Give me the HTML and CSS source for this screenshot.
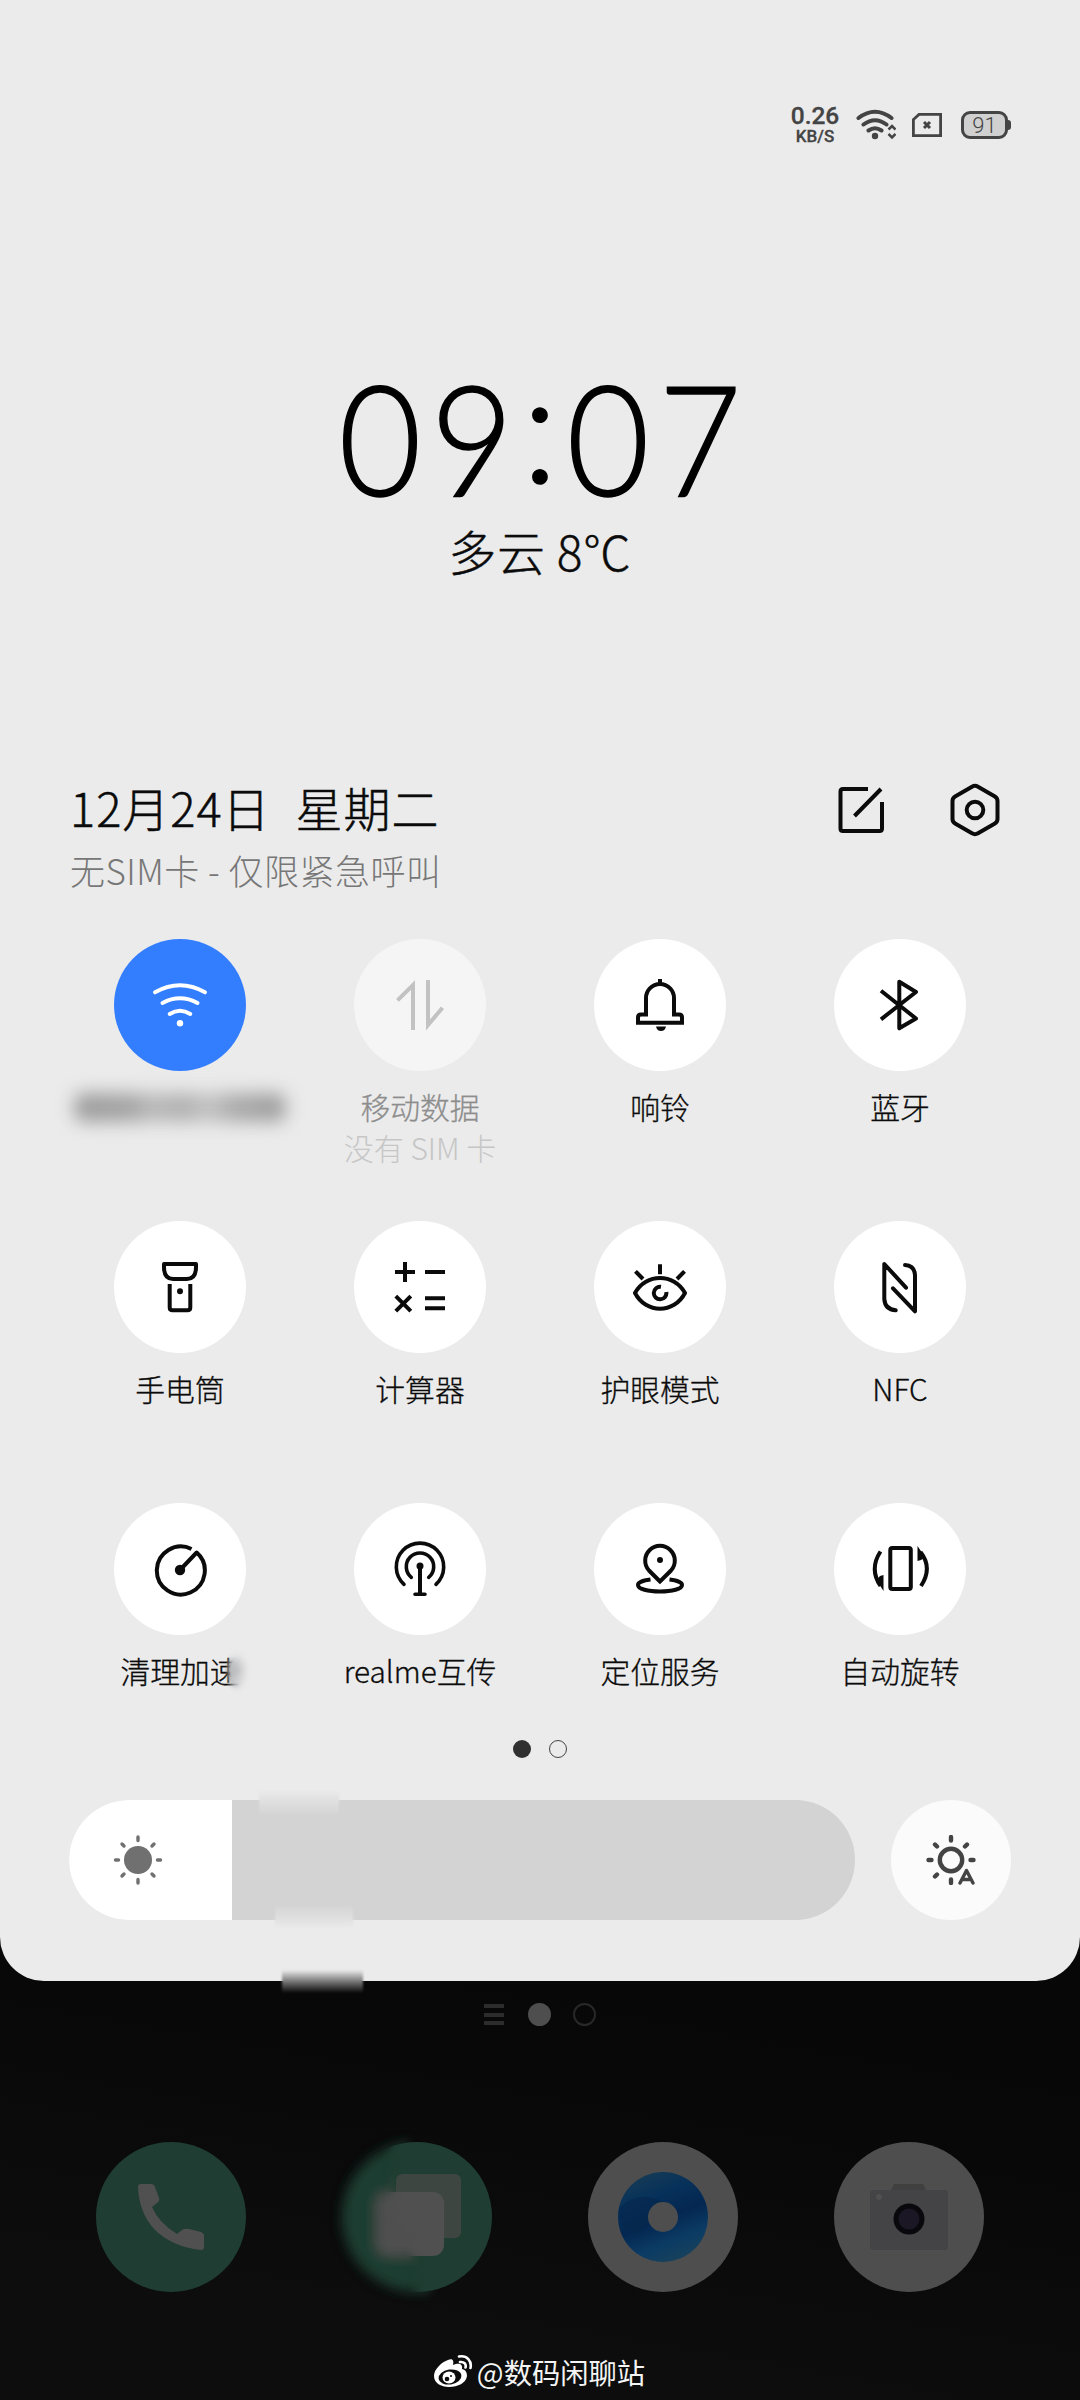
FILE: index.html
```html
<!DOCTYPE html>
<html lang="zh-CN">
<head>
<meta charset="utf-8">
<title>控制中心</title>
<link rel="stylesheet" href="styles.css">
</head>
<body>
<div class="screen">
  <main class="panel">
    <div class="status">
      <div class="speed"><span class="rate">0.26</span><span class="unit">KB/S</span></div>
      <svg class="st-wifi" width="40" height="32" viewBox="0 0 40 32" fill="none" stroke="#444" stroke-width="4" stroke-linecap="round">
        <path d="M2.500 9Q19 -3.500 35.500 9M7.500 15.500Q19 7 30.500 15.500M12.500 21.500Q19 17 25.500 21.500"/><circle cx="19" cy="27" r="3.200" fill="#444" stroke="none"/>
        <path d="M32.500 20.500l3.500-3.500 3.500 3.500M32.500 25l3.500 3.500 3.500-3.500" stroke-width="2.500" stroke-linecap="butt"/>
      </svg>
      <svg class="st-sim" width="30" height="24" viewBox="0 0 30 24" fill="none" stroke="#444" stroke-width="2.800">
        <path d="M7 1.400H28.600V22.600H1.400V6.500Z"/><path d="M12 9l6 6M18 9l-6 6" stroke-width="3"/>
      </svg>
      <div class="battery">91</div>
    </div>

    <section class="clock">
      <div class="time"><span>0</span><span>9</span><span class="colon">:</span><span>0</span><span>7</span></div>
      <div class="weather">多云 8℃</div>
    </section>

    <header class="head">
      <div>
        <div class="date">12月24日<span class="week">星期二</span></div>
        <div class="carrier">无SIM卡 - 仅限紧急呼叫</div>
      </div>
      <div class="actions">
        <svg width="46" height="52" viewBox="0 0 46 52" fill="none" stroke="#0b0b0b" stroke-width="4">
          <path d="M30 5H5Q2.500 5 2.500 7.500V44.500Q2.500 47 5 47H41.500Q44 47 44 44.500V18M16.500 32L43 5"/>
        </svg>
        <svg width="50" height="54" viewBox="-25 -27 50 54" fill="none" stroke="#0b0b0b" stroke-width="4" stroke-linejoin="round">
          <path d="M-3-23.300Q0-25 3-23.300L19.500-13.700Q22.500-12 22.500-9V9Q22.500 12 19.500 13.700L3 23.300Q0 25-3 23.300L-19.500 13.700Q-22.500 12-22.500 9V-9Q-22.500-12-19.500-13.700Z"/><circle r="8.300"/>
        </svg>
      </div>
    </header>

    <section class="tiles">
      <div class="tile">
        <div class="disc on"><svg class="ico" viewBox="-30 -30 60 60"><path class="round" d="M-25-12.700Q0-26.700 25-12.700M-17.500-2Q0-11.500 17.500-2M-10.300 9Q0 2.400 10.300 9"/><circle class="fill" cy="18.300" r="3.200"/></svg></div>
        <div class="masked"></div>
      </div>
      <div class="tile off">
        <div class="disc"><svg class="ico" viewBox="-30 -30 60 60"><path d="M-22.500-4.700L-7-20V25M8-25V20L22.500 2.700"/></svg></div>
        <div class="label">移动数据</div><div class="sub">没有 SIM 卡</div>
      </div>
      <div class="tile">
        <div class="disc"><svg class="ico" viewBox="-30 -30 60 60"><path d="M0-21V-26M-14 9.500V-7A14 14 0 0 1 14-7V9.500H19Q22 9.500 22 12.500V17.700H-22V12.500Q-22 9.500-19 9.500H-12M12 9.500H16"/><path class="fill" d="M-4 21.500H6Q5 26 1 26T-4 21.500Z"/></svg></div>
        <div class="label">响铃</div>
      </div>
      <div class="tile">
        <div class="disc"><svg class="ico" viewBox="-30 -30 60 60"><path class="join" d="M-19-14.300L16 13.500-.7 23.300V-23.300L16-13-19 14.300"/></svg></div>
        <div class="label">蓝牙</div>
      </div>

      <div class="tile">
        <div class="disc"><svg class="ico" viewBox="-30 -30 60 60"><path class="join" d="M-16-23H16V-20Q16-8 7-8H-7Q-16-8-16-20Z"/><path d="M-10.300-3V20.500Q-10.300 23.300-7.500 23.300H7.500Q10.300 23.300 10.300 20.500V-3"/><circle class="fill" cy="4.300" r="3"/></svg></div>
        <div class="label">手电筒</div>
      </div>
      <div class="tile">
        <div class="disc"><svg class="ico" viewBox="-30 -30 60 60"><path d="M-25-15H-5M-15-25V-5M5-15H25M-24.200 9.200L-9.200 24.200M-9.200 9.200L-24.200 24.200M5 11.300H25M5 21.300H25"/></svg></div>
        <div class="label">计算器</div>
      </div>
      <div class="tile">
        <div class="disc"><svg class="ico" viewBox="-30 -30 60 60"><path class="join" d="M-25 6C-14-14 14-14 25 6C14 27-14 27-25 6ZM0-22.700V-12.700M-24.500-15.700L-17-8M24.500-15.700L17-8M1-.2A6.300 6.300 0 1 0 6.300 5"/></svg></div>
        <div class="label">护眼模式</div>
      </div>
      <div class="tile">
        <div class="disc"><svg class="ico" viewBox="-30 -30 60 60"><path class="round" d="M6 .7L-15.700-23V12Q-15 22.500-4.300 23.300M-7 1.300L15 24.300V-12Q14.500-21.500 5-22"/></svg></div>
        <div class="label">NFC</div>
      </div>

      <div class="tile">
        <div class="disc"><svg class="ico" viewBox="-30 -30 60 60"><path class="join" d="M11.500-20A24 24 0 1 0 16.700-16.500L0 1"/><circle class="fill" cy="1" r="5.200"/></svg></div>
        <div class="label smudged">清理加速</div>
      </div>
      <div class="tile">
        <div class="disc"><svg class="ico" viewBox="-30 -30 60 60"><path class="round thin" d="M-8.700 8.300A13.700 13.700 0 1 1 8.700 8.300M-16 15.300A23.700 23.700 0 1 1 16 15.300M-5 25.300H5"/><path d="M0-3V25"/><circle class="fill" cy="-3" r="3.500"/></svg></div>
        <div class="label">realme互传</div>
      </div>
      <div class="tile">
        <div class="disc"><svg class="ico" viewBox="-30 -30 60 60"><path d="M0 12.500L-11 1.500A14.800 14.800 0 1 1 11 1.500ZM-9.500 10.600C-17 11.500-22 13.500-22 16C-22 20-12 22.500 0 22.500S22 20 22 16C22 13.500 17 11.500 9.500 10.600"/><circle class="fill" cy="-9" r="3"/></svg></div>
        <div class="label">定位服务</div>
      </div>
      <div class="tile">
        <div class="disc"><svg class="ico" viewBox="-30 -30 60 60"><rect x="-9.700" y="-21" width="20.500" height="41" rx="2"/><path d="M-19.500-17.500Q-31 0-19.500 17M21 17Q33-1 20.500-17"/><path class="fill" d="M-16.500 6V22L-23.500 11-20 7ZM17.500-23V-8L21-9 25-12Z"/></svg></div>
        <div class="label">自动旋转</div>
      </div>
    </section>

    <div class="pages"><i class="cur"></i><i></i></div>

    <section class="bright">
      <div class="slider">
        <div class="level">
          <svg width="50" height="50" viewBox="-25 -25 50 50" stroke="#707070" stroke-width="3.400" stroke-linecap="round"><circle r="14" fill="#707070" stroke="none"/><path d="M0-23V-19.500M0 23V19.500M-22.500 0H-19.500M22.500 0H19.500M-16-16L-14-14M16-16L14-14M-16 16L-14 14M16 16L14 14"/></svg>
        </div>
        <i class="streak top"></i><i class="streak low"></i>
      </div>
      <div class="auto">
        <svg width="50" height="50" viewBox="-25 -25 50 50" fill="none" stroke="#444" stroke-width="4.400" stroke-linecap="round"><circle r="11.200"/><path d="M0-23V-19.500M0 23V19.500M-22.500 0H-19.500M22.500 0H19.500M-16-15.500L-14-13.500M16-15.500L14-13.500M-16 16.500L-14 14.500"/><path d="M9 23L15.500 10.500 22 23M11.500 19.500H19.500" stroke-width="3.400" stroke-linejoin="round"/></svg>
      </div>
    </section>
    <i class="streak edge"></i>
  </main>

  <div class="home">
    <div class="home-pages"><span class="menu"></span><span class="dot"></span><span class="ring"></span></div>
    <nav class="dock">
      <svg width="150" height="150" viewBox="0 0 150 150"><circle cx="75" cy="75" r="75" fill="#1f3d32"/><path fill="#505050" d="M45 42H55Q58 42 59 45L63 56Q64 59 61 61L56 65Q62 80 81 92L86 88Q89 86 93 87L105 90Q108 91 108 94V105Q108 108 105 108Q76 105 58 87Q43 70 42 45Q42 42 45 42Z"/></svg>
      <svg class="msg" width="150" height="150" viewBox="0 0 150 150">
        <defs>
          <filter id="soft" x="-20%" y="-20%" width="140%" height="140%"><feGaussianBlur stdDeviation="6"/></filter>
          <filter id="feather" x="-20%" y="-20%" width="140%" height="140%"><feGaussianBlur stdDeviation="4"/></filter>
          <mask id="smear" maskUnits="userSpaceOnUse" x="-40" y="-40" width="230" height="230"><path filter="url(#feather)" fill="#fff" d="M-60-60H62L72 75C86 90 92 104 88 200H-60Z"/></mask>
          <mask id="crisp" maskUnits="userSpaceOnUse" x="-40" y="-40" width="230" height="230"><path filter="url(#feather)" fill="#fff" d="M46-60H220V220H74C78 104 68 90 52 75Z"/></mask>
          <g id="bubbles"><circle cx="75" cy="75" r="75" fill="#1f3d32"/><rect x="54" y="32" width="65" height="64" rx="6" fill="#3e4642"/><rect x="34" y="50" width="68" height="64" rx="11" fill="#505050"/></g>
        </defs>
        <g mask="url(#smear)"><use href="#bubbles" filter="url(#soft)"/></g>
        <g mask="url(#crisp)"><use href="#bubbles"/></g>
      </svg>
      <svg width="150" height="150" viewBox="0 0 150 150">
        <defs><linearGradient id="disc" x1=".2" y1="0" x2=".6" y2="1"><stop offset="0" stop-color="#173c55"/><stop offset=".3" stop-color="#07315a"/><stop offset=".55" stop-color="#042750"/><stop offset=".8" stop-color="#0b3b64"/><stop offset="1" stop-color="#17415c"/></linearGradient></defs>
        <circle cx="75" cy="75" r="75" fill="#4e4e4e"/><circle cx="75" cy="75" r="45" fill="url(#disc)"/><path d="M31 66Q51 46 79 62L60 82Q51 97 38 88Q29 79 31 66Z" fill="#05284f" opacity=".7"/><circle cx="75" cy="75" r="15" fill="#4e4e4e"/>
      </svg>
      <svg width="150" height="150" viewBox="0 0 150 150"><circle cx="75" cy="75" r="75" fill="#4e4e4e"/><path d="M60 42H89L92 48H57Z" fill="#404040"/><rect x="36" y="48" width="78" height="60" rx="3" fill="#444446"/><circle cx="45" cy="55" r="3" fill="#505050"/><circle cx="75" cy="77" r="13" fill="#1b1724" stroke="#08080d" stroke-width="5"/></svg>
    </nav>
    <footer class="credit">
      <svg width="40" height="34" viewBox="0 0 40 34"><path fill="#fff" d="M15 6C20 4 21 7 20 11C25 9 30 9 29 15C33 16 34 19 34 22C33 29 25 33 16 33C8 33 1 29 1 22C1 15 9 8 15 6Z"/><ellipse cx="17" cy="23" rx="11.500" ry="7.500" transform="rotate(-8 17 23)" fill="#0c0c0c"/><ellipse cx="16" cy="23.500" rx="6.500" ry="6" fill="#fff"/><circle cx="14" cy="25" r="2.300" fill="#0c0c0c"/><circle cx="18" cy="22" r="1" fill="#0c0c0c"/><path d="M26 2.500C34 1 39 7 37.500 14M27 8C31 7.500 33.500 10 32.500 13.500" fill="none" stroke="#fff" stroke-width="2.600" stroke-linecap="round"/></svg>
      <span>@数码闲聊站</span>
    </footer>
  </div>
</div>
</body>
</html>
```
FILE: styles.css
```css
* { box-sizing: border-box; }
body { margin: 0; background: #0a0a0a; }
.screen {
  width: 1080px;
  height: 2400px;
  overflow: hidden;
  background: linear-gradient(190deg, #060606 65%, #080808 84%, #0d0d0d 94%);
  font-family: "Noto Sans CJK SC", sans-serif;
  font-weight: 300;
  color: #0b0b0b;
}
.panel {
  position: relative;
  height: 1981px;
  padding-top: 102px;
  background: #ebebeb;
  border-radius: 0 0 44px 44px;
}

/* Status bar */
.status {
  display: flex;
  align-items: center;
  height: 46px;
  padding-right: 69px;
  justify-content: flex-end;
  color: #444;
}
.speed {
  display: flex;
  flex-direction: column;
  align-items: center;
  width: 50px;
  font-family: Roboto, sans-serif;
  font-weight: 500;
  -webkit-text-stroke: .300px;
}
.rate { font-size: 24.500px; line-height: 22px; }
.unit { font-size: 17px; line-height: 19px; }
.st-wifi { margin-left: 16px; }
.st-sim { margin-left: 16px; }
.battery {
  position: relative;
  width: 47px;
  height: 28px;
  margin: 0 3px 0 19px;
  border: 3px solid #444;
  border-radius: 9px;
  background: #d0d0d0;
  font: 300 22px/23px Roboto, sans-serif;
  text-align: center;
}
.battery::after {
  content: "";
  position: absolute;
  right: -6px;
  top: 6px;
  width: 3px;
  height: 10px;
  border-radius: 0 3px 3px 0;
  background: #444;
}

/* Clock */
.clock { height: 612px; padding-top: 196px; text-align: center; }
.time {
  display: flex;
  justify-content: center;
  height: 171px;
  font: 300 154px/186px Lato, sans-serif;
  color: #000;
  -webkit-text-stroke: 1.500px #000;
}
.time span { width: 92px; transform: scaleX(.93); }
.time .colon { width: 44px; line-height: 160px; transform: none; }
.weather {
  font-size: 48px;
  line-height: 70px;
  letter-spacing: .600px;
  -webkit-text-stroke: .400px;
}

/* Date row */
.head {
  display: flex;
  justify-content: space-between;
  height: 179px;
  padding: 22px 80px 0 70px;
}
.date {
  height: 54px;
  font-size: 47px;
  line-height: 50px;
  letter-spacing: 1px;
  white-space: nowrap;
  -webkit-text-stroke: .500px;
}
.week { margin-left: 25px; }
.carrier {
  font-size: 35px;
  line-height: 67px;
  letter-spacing: .500px;
  color: #777;
  white-space: nowrap;
}
.actions { display: flex; align-items: center; gap: 66px; height: 56px; }

/* Quick toggles */
.tiles {
  display: grid;
  grid-template-columns: repeat(4, 240px);
  grid-auto-rows: 282px;
  height: 796px;
  padding: 0 60px;
}
.tile { display: flex; flex-direction: column; align-items: center; }
.disc {
  display: flex;
  align-items: center;
  justify-content: center;
  width: 132px;
  height: 132px;
  border-radius: 50%;
  background: #fff;
  color: #0b0b0b;
}
.disc.on { background: #337dff; color: #fff; }
.ico { width: 60px; height: 60px; fill: none; stroke: currentColor; stroke-width: 4; }
.ico .fill { fill: currentColor; stroke: none; }
.ico .round { stroke-linecap: round; stroke-linejoin: round; }
.ico .join { stroke-linejoin: round; }
.ico .thin { stroke-width: 3.600; }
.label {
  margin-top: 13px;
  font-size: 29.800px;
  line-height: 44px;
  white-space: nowrap;
  -webkit-text-stroke: .300px;
}
.sub { font-size: 30px; line-height: 39px; color: #c6c6c6; white-space: nowrap; }
.off .disc { background: #f5f5f5; color: #c2c2c2; }
.off .label { color: #8d8d8d; }
.masked {
  width: 212px;
  height: 29px;
  margin-top: 22px;
  border-radius: 10px;
  background: linear-gradient(90deg, #9c9c9c, #a4a4a4 28%, #bababa 36%, #b0b0b0 52%, #c4c4c4 64%, #acacac 74%, #9c9c9c);
  filter: blur(9px);
}
.smudged { position: relative; }
.smudged::after {
  content: "";
  position: absolute;
  right: -12px;
  top: 0;
  width: 28px;
  height: 46px;
  background: radial-gradient(closest-side, #c4c4c4cc, #d8d8d8aa 50%, #ebebeb00);
  backdrop-filter: blur(3px);
  -webkit-mask-image: radial-gradient(closest-side, #000 50%, transparent);
  mask-image: radial-gradient(closest-side, #000 50%, transparent);
}

/* Page indicator */
.pages { display: flex; justify-content: center; gap: 18px; height: 65px; padding-top: 5px; }
.pages i { width: 18px; height: 18px; border: 1.500px solid #444; border-radius: 50%; }
.pages .cur { border: 0; background: #303030; }

/* Brightness */
.bright { display: flex; gap: 36px; padding: 0 69px; }
.slider {
  position: relative;
  width: 786px;
  height: 120px;
  border-radius: 60px;
  background: #d3d3d3;
}
.level {
  display: flex;
  align-items: center;
  width: 163px;
  height: 120px;
  padding-left: 44px;
  border-radius: 60px 0 0 60px;
  background: #fff;
}
.auto {
  display: flex;
  align-items: center;
  justify-content: center;
  width: 120px;
  height: 120px;
  border-radius: 50%;
  background: #fbfbfb;
}
.streak { position: absolute; filter: blur(1px); }
.streak.top { left: 190px; top: -8px; width: 80px; height: 24px; background: linear-gradient(#e8e8e8, #d3d3d3); }
.streak.low { left: 206px; top: 104px; width: 78px; height: 23px; background: linear-gradient(#d3d3d3, #e8e8e8); }
.streak.edge { left: 282px; top: 1970px; width: 81px; height: 23px; background: linear-gradient(#ebebeb, #777 50%, #080808); }

/* Home screen behind the panel */
.home-pages {
  display: flex;
  align-items: center;
  height: 66px;
  padding-left: 484px;
}
.menu {
  width: 20px;
  height: 21px;
  background: repeating-linear-gradient(#2c2c2c 0 4px, transparent 4px 8.500px);
}
.dot { width: 23px; height: 23px; margin-left: 24px; border-radius: 50%; background: #4e4e4e; }
.ring { width: 23px; height: 23px; margin-left: 22px; border: 2px solid #282828; border-radius: 50%; }
.dock { display: flex; justify-content: space-between; padding: 95px 96px 0; }
.msg { overflow: visible; }
.credit {
  display: flex;
  align-items: center;
  justify-content: center;
  gap: 4px;
  height: 50px;
  margin-top: 54px;
  padding-right: 2px;
  font-size: 28.300px;
  font-weight: 400;
  color: #f4f4f4;
}
```
